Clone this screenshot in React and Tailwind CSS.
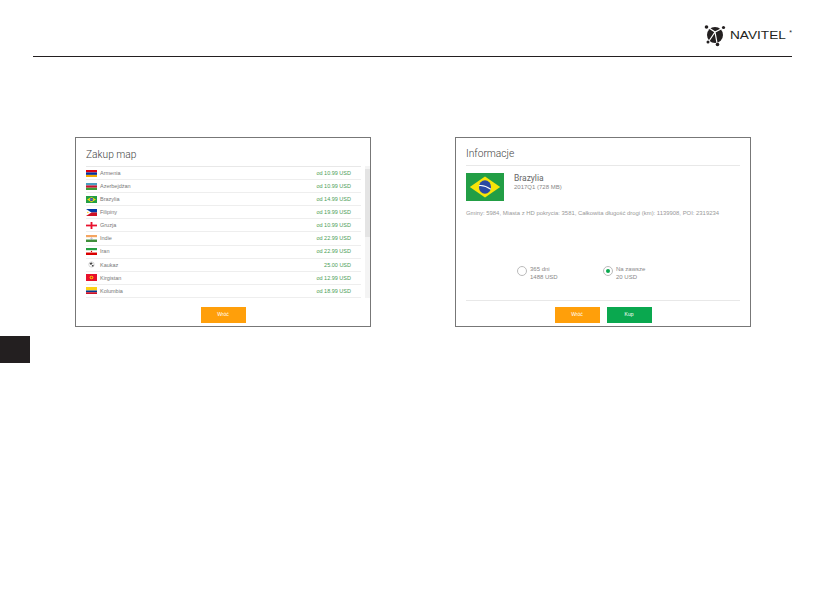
const countries = [
  { name: "Armenia", price: "od 10.99 USD", flag: "am" },
  { name: "Azerbejdżan", price: "od 10.99 USD", flag: "az" },
  { name: "Brazylia", price: "od 14.99 USD", flag: "br" },
  { name: "Filipiny", price: "od 19.99 USD", flag: "ph" },
  { name: "Gruzja", price: "od 10.99 USD", flag: "ge" },
  { name: "Indie", price: "od 22.99 USD", flag: "in" },
  { name: "Iran", price: "od 22.99 USD", flag: "ir" },
  { name: "Kaukaz", price: "25.00 USD", flag: "globe" },
  { name: "Kirgistan", price: "od 12.99 USD", flag: "kg" },
  { name: "Kolumbia", price: "od 18.99 USD", flag: "co" },
];

const Flag = ({ code, className }) => {
  const shapes = {
    am: (
      <>
        <rect width="30" height="7" fill="#d90012" />
        <rect y="7" width="30" height="7" fill="#0033a0" />
        <rect y="14" width="30" height="6" fill="#f2a800" />
      </>
    ),
    az: (
      <>
        <rect width="30" height="7" fill="#3f9c35" transform="translate(0 13)" />
        <rect width="30" height="7" fill="#4a9fc0" />
        <rect y="7" width="30" height="6" fill="#c8102e" />
      </>
    ),
    br: (
      <>
        <rect width="30" height="20" fill="#229e45" />
        <polygon points="15,2.5 27,10 15,17.5 3,10" fill="#f8e509" />
        <circle cx="15" cy="10" r="4.8" fill="#2b49a3" />
        <path d="M10.4 9 Q15 8.6 19.6 11.6" stroke="#fff" strokeWidth="0.8" fill="none" />
      </>
    ),
    ph: (
      <>
        <rect width="30" height="10" fill="#0038a8" />
        <rect y="10" width="30" height="10" fill="#ce1126" />
        <polygon points="0,0 15,10 0,20" fill="#fff" />
        <circle cx="5" cy="10" r="2" fill="#fcd116" />
      </>
    ),
    ge: (
      <>
        <rect width="30" height="20" fill="#fff" />
        <rect x="12.5" width="5" height="20" fill="#e8112d" />
        <rect y="7.5" width="30" height="5" fill="#e8112d" />
      </>
    ),
    in: (
      <>
        <rect width="30" height="7" fill="#f4a460" />
        <rect y="7" width="30" height="6" fill="#fff" />
        <rect y="13" width="30" height="7" fill="#3f8f3a" />
        <circle cx="15" cy="10" r="2" fill="none" stroke="#000080" strokeWidth="0.6" />
      </>
    ),
    ir: (
      <>
        <rect width="30" height="7" fill="#239f40" />
        <rect y="7" width="30" height="6" fill="#fff" />
        <rect y="13" width="30" height="7" fill="#da0000" />
        <circle cx="15" cy="10" r="1.8" fill="#da0000" />
      </>
    ),
    globe: (
      <>
        <rect width="30" height="20" fill="#fff" />
        <circle cx="15" cy="10" r="7.5" fill="#fff" stroke="#999" strokeWidth="1" />
        <path d="M10 6 L16 4 L18 8 L14 11 L11 10 Z M16 12 L21 11 L20 16 L16 16 Z" fill="#444" />
      </>
    ),
    kg: (
      <>
        <rect width="30" height="20" fill="#e8112d" />
        <circle cx="15" cy="10" r="5" fill="#ffd900" />
        <circle cx="15" cy="10" r="2.6" fill="#e8112d" />
      </>
    ),
    co: (
      <>
        <rect width="30" height="10" fill="#fcd116" />
        <rect y="10" width="30" height="5" fill="#003893" />
        <rect y="15" width="30" height="5" fill="#ce1126" />
      </>
    ),
  };
  return (
    <svg viewBox="0 0 30 20" preserveAspectRatio="none" className={className}>
      {shapes[code]}
    </svg>
  );
};

const Logo = () => (
  <svg viewBox="0 0 24 24" className="w-[24px] h-[24px]">
    <circle cx="12" cy="12" r="8" fill="#231f20" />
    <path d="M3 3 L12 9 L20 5 M12 9 L14 20 M6 18 L12 9" stroke="#fff" strokeWidth="1.2" fill="none" />
    <circle cx="3.5" cy="4" r="1.8" fill="#231f20" />
    <circle cx="20.5" cy="4.5" r="1.6" fill="#231f20" />
    <circle cx="5" cy="19" r="1.5" fill="#231f20" />
    <circle cx="14.5" cy="21.5" r="1.8" fill="#231f20" />
  </svg>
);

const Button = ({ children, color }) => (
  <button className={`w-[45px] h-[16px] flex items-center justify-center text-[5px] text-[#fff] ${color}`}>
    {children}
  </button>
);

const Radio = ({ checked, line1, line2 }) => (
  <div className="flex items-start gap-[3px] whitespace-nowrap">
    <div className="w-[10px] h-[10px] shrink-0 rounded-full border border-[#bbb] flex items-center justify-center">
      {checked && <div className="w-[4px] h-[4px] rounded-full bg-[#0aa84f]" />}
    </div>
    <div className="text-[6px] leading-[7.5px] text-[#888]">
      <div>{line1}</div>
      <div>{line2}</div>
    </div>
  </div>
);

const App = () => {
  return (
    <div className="w-[840px] h-[595px] bg-white overflow-hidden font-['Liberation_Sans',sans-serif]">
      {/* header */}
      <div className="ml-[33px] w-[759px] h-[57px] border-b border-[#231f20] flex items-end justify-end pb-[9px]">
        <div className="flex items-center gap-[3px]">
          <Logo />
          <span className="text-[10.5px] leading-[12px] scale-x-[1.3] origin-left w-[56px] text-[#231f20]">NAVITEL</span>
          <span className="text-[7px] leading-[12px] -mt-[5px] text-[#231f20]">*</span>
        </div>
      </div>

      {/* screenshots */}
      <div className="flex ml-[75px] mt-[80px] gap-[84px]">
        <div className="w-[296px] h-[190px] border border-[#777] flex flex-col">
          <div className="h-[28px] shrink-0 mx-[10px] flex items-end pb-[5px] font-['Roboto',sans-serif] font-light text-[10.2px] leading-[13px] text-[#444]">
            Zakup map
          </div>
          <div className="flex h-[132px] shrink-0">
            <div className="ml-[10px] w-[275px] border-t border-[#e8e8e8]">
              {countries.map((c) => (
                <div key={c.name} className="h-[13.1px] flex items-center border-b border-[#eee]">
                  <Flag code={c.flag} className="w-[11px] h-[7px]" />
                  <span className="ml-[3px] text-[5.5px] text-[#777]">{c.name}</span>
                  <span className="ml-auto mr-[10px] text-[5.5px] text-[#4a9d55]">{c.price}</span>
                </div>
              ))}
            </div>
            <div className="ml-auto w-[5px] bg-[#f4f4f4]">
              <div className="mt-[3px] h-[68px] bg-[#e4e4e4]" />
            </div>
          </div>
          <div className="flex justify-center mt-[9px]">
            <Button color="bg-[#ff9f0a]">Wróć</Button>
          </div>
        </div>

        <div className="w-[296px] h-[190px] border border-[#777] flex flex-col">
          <div className="h-[28px] shrink-0 mx-[10px] border-b border-[#e8e8e8] flex items-end pb-[5px] font-['Roboto',sans-serif] font-light text-[10.2px] leading-[13px] text-[#444]">
            Informacje
          </div>
          <div className="flex mx-[10px] mt-[7px]">
            <Flag code="br" className="w-[38px] h-[28px]" />
            <div className="ml-[10px]">
              <div className="font-['Roboto',sans-serif] text-[8.5px] leading-[10px] text-[#666]">Brazylia</div>
              <div className="text-[6px] leading-[8px] text-[#888]">2017Q1 (728 MB)</div>
            </div>
          </div>
          <div className="mx-[10px] mt-[8px] text-[5.9px] leading-[8px] whitespace-nowrap text-[#999]">
            Gminy: 5984, Miasta z HD pokrycia: 3581, Całkowita długość drogi (km): 1139908, POI: 2319234
          </div>
          <div className="flex ml-[61px] mt-[49px] gap-[47px]">
            <div className="w-[39px]">
              <Radio line1="365 dni" line2="1488 USD" />
            </div>
            <Radio checked line1="Na zawsze" line2="20 USD" />
          </div>
          <div className="mx-[10px] mt-[19px] border-t border-[#e8e8e8] flex justify-center gap-[7px] pt-[6px]">
            <Button color="bg-[#ff9f0a]">Wróć</Button>
            <Button color="bg-[#0aa84f]">Kup</Button>
          </div>
        </div>
      </div>

      {/* side tab */}
      <div className="w-[30px] h-[27px] mt-[9px] bg-[#231f20]" />
    </div>
  );
};

export default App;
